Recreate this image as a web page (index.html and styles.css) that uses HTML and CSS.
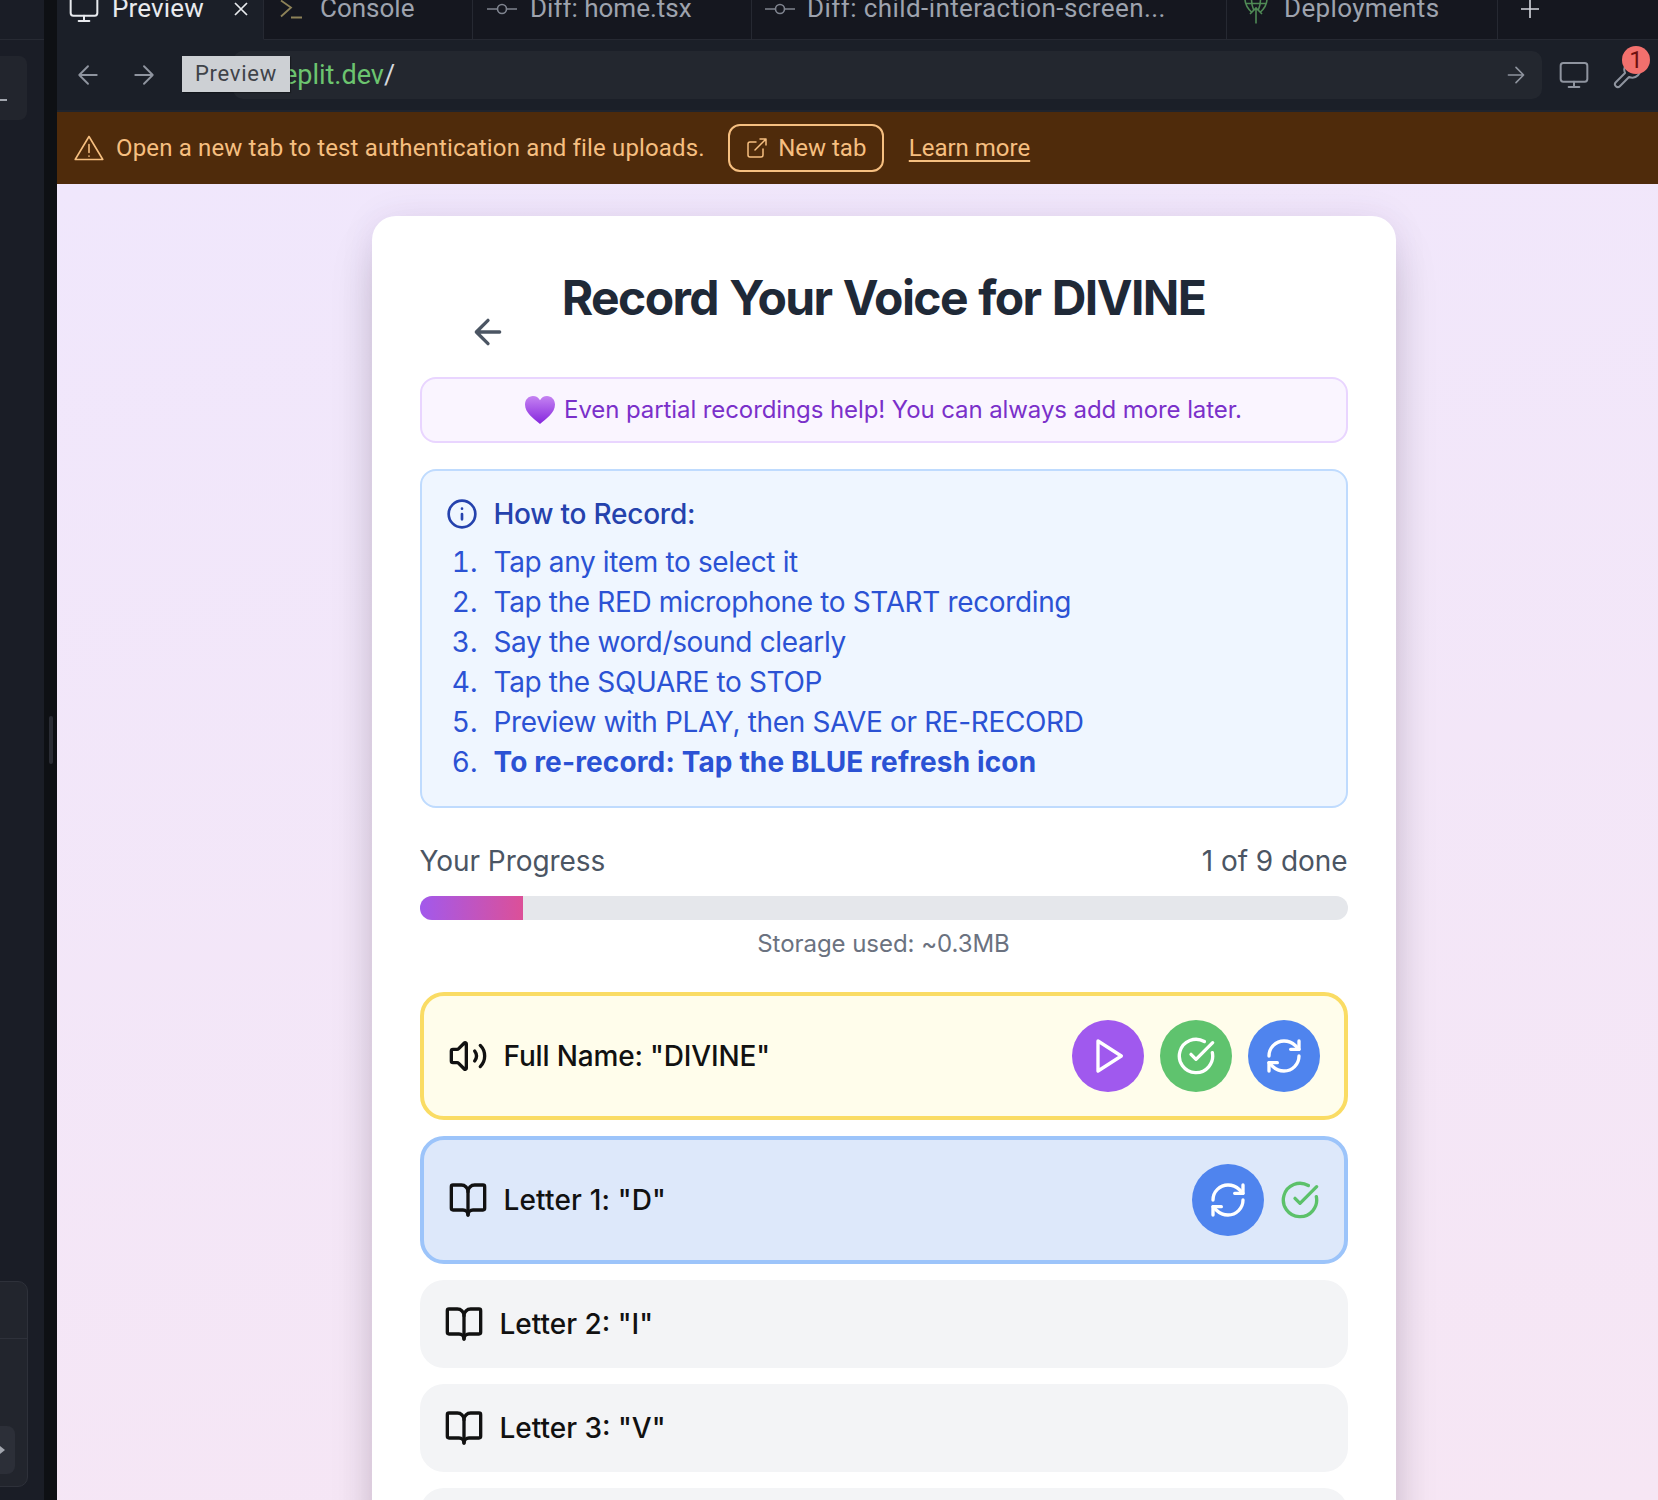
FILE: index.html
```html
<!DOCTYPE html>
<html lang="en">
<head>
<meta charset="utf-8">
<title>Record Your Voice for DIVINE</title>
<link rel="stylesheet" href="styles.css">
</head>
<body>
<svg class="sprite" xmlns="http://www.w3.org/2000/svg">
  <symbol id="i-monitor" viewBox="0 0 24 24"><rect x="2" y="3" width="20" height="14" rx="2"/><path d="M8 21h8M12 17v4"/></symbol>
  <symbol id="i-left" viewBox="0 0 24 24"><path d="m12 19-7-7 7-7M19 12H5"/></symbol>
  <symbol id="i-right" viewBox="0 0 24 24"><path d="M5 12h14M12 5l7 7-7 7"/></symbol>
  <symbol id="i-refresh" viewBox="0 0 24 24"><path d="M3 12a9 9 0 0 1 9-9 9.75 9.75 0 0 1 6.74 2.74L21 8"/><path d="M21 3v5h-5"/><path d="M21 12a9 9 0 0 1-9 9 9.75 9.75 0 0 1-6.74-2.74L3 16"/><path d="M8 16H3v5"/></symbol>
  <symbol id="i-check" viewBox="0 0 24 24"><path d="M21.801 10A10 10 0 1 1 17 3.335"/><path d="m9 11 3 3L22 4"/></symbol>
  <symbol id="i-book" viewBox="0 0 24 24"><path d="M12 7v14"/><path d="M3 18a1 1 0 0 1-1-1V4a1 1 0 0 1 1-1h5a4 4 0 0 1 4 4 4 4 0 0 1 4-4h5a1 1 0 0 1 1 1v13a1 1 0 0 1-1 1h-6a3 3 0 0 0-3 3 3 3 0 0 0-3-3z"/></symbol>
  <symbol id="i-commit" viewBox="0 0 30 18"><circle cx="15" cy="9" r="4.5"/><path d="M0 9h10.5M19.500 9H30"/></symbol>
</svg>

<div class="app">
  <aside class="sidebar">
    <div class="side-head"></div>
    <div class="side-chip"><span class="side-dash"></span></div>
    <div class="side-panel">
      <div class="side-panel-top"></div>
      <div class="side-panel-body"><div class="side-play"><span class="side-tri"></span></div></div>
    </div>
  </aside>
  <div class="gutter"><span class="handle"></span></div>

  <main class="main">
    <nav class="tabs">
      <div class="tab tab-active tab-preview">
        <div class="tab-row">
          <svg class="ico ico-tab-monitor"><use href="#i-monitor"/></svg>
          <span class="tab-label">Preview</span>
          <svg class="ico-close" viewBox="0 0 24 24"><path d="M6 6l12 12M18 6L6 18"/></svg>
        </div>
      </div>
      <div class="tab tab-console">
        <div class="tab-row">
          <svg class="ico-console" viewBox="0 0 28 28"><path d="M4 5.5l10 7-10 9M14 22.500h11"/></svg>
          <span class="tab-label">Console</span>
        </div>
      </div>
      <div class="tab tab-diff1">
        <div class="tab-row">
          <svg class="ico-commit"><use href="#i-commit"/></svg>
          <span class="tab-label">Diff: home.tsx</span>
        </div>
      </div>
      <div class="tab tab-diff2">
        <div class="tab-row">
          <svg class="ico-commit"><use href="#i-commit"/></svg>
          <span class="tab-label">Diff: child-interaction-screen...</span>
        </div>
      </div>
      <div class="tab tab-deploy">
        <div class="tab-row">
          <svg class="ico-deploy" viewBox="0 0 24 30"><path d="M12 14v15.500M6 20l6-6 6 6M1 5c0 5 3 10 7 13.500M23 5c0 5-3 10-7 13.500M1.500 9.500h21M7.500 5c0 4 .5 7 2 10.500M16.500 5c0 4-.5 7-2 10.500"/></svg>
          <span class="tab-label">Deployments</span>
        </div>
      </div>
      <div class="tab-add">
        <div class="tab-row">
          <svg class="ico-plus" viewBox="0 0 18 18"><path d="M9 0v18M0 9h18"/></svg>
        </div>
      </div>
    </nav>

    <div class="toolbar">
      <svg class="ico ico-nav"><use href="#i-left"/></svg>
      <svg class="ico ico-nav"><use href="#i-right"/></svg>
      <div class="urlbar">
        <span class="url"><span class="url-host">replit.dev</span>/</span>
        <svg class="ico ico-go"><use href="#i-right"/></svg>
      </div>
      <span class="tooltip">Preview</span>
      <svg class="ico ico-tool"><use href="#i-monitor"/></svg>
      <div class="wrench">
        <svg class="ico ico-tool" viewBox="0 0 24 24"><path d="M14.7 6.3a1 1 0 0 0 0 1.4l1.6 1.6a1 1 0 0 0 1.4 0l3.77-3.77a6 6 0 0 1-7.94 7.94l-6.91 6.91a2.12 2.12 0 0 1-3-3l6.91-6.91a6 6 0 0 1 7.94-7.94l-3.76 3.76z"/></svg>
        <span class="badge">1</span>
      </div>
    </div>

    <div class="banner">
      <svg class="ico-warn" viewBox="0 0 30 26"><path d="M15 1.500 1.200 24.500h27.600zM15 9.500v8M15 21v.2"/></svg>
      <span class="banner-text">Open a new tab to test authentication and file uploads.</span>
      <span class="newtab">
        <svg class="ico-ext" viewBox="0 0 24 24"><path d="M18 13v6a2 2 0 0 1-2 2H5a2 2 0 0 1-2-2V8a2 2 0 0 1 2-2h6M15 3h6v6M10 14 21 3"/></svg>
        New tab
      </span>
      <a class="learn">Learn more</a>
    </div>

    <div class="page">
      <section class="card">
        <header class="card-head">
          <svg class="ico ico-back"><use href="#i-left"/></svg>
          <h1 class="title">Record Your Voice for DIVINE</h1>
        </header>

        <div class="note">
          <svg class="heart" viewBox="0 0 30 28">
            <defs><linearGradient id="hg" x1="0" y1="0" x2="0" y2="1"><stop offset="0" stop-color="#c583f2"/><stop offset="1" stop-color="#8526dd"/></linearGradient></defs>
            <path fill="url(#hg)" d="M15 28C9 23 0 17 0 8.500 0 3.500 3.600 0 8 0c3 0 5.600 1.600 7 4.200C16.400 1.600 19 0 22 0c4.400 0 8 3.500 8 8.500C30 17 21 23 15 28z"/>
          </svg>
          <span class="note-text">Even partial recordings help! You can always add more later.</span>
        </div>

        <div class="howto">
          <div class="howto-head">
            <svg class="ico ico-info" viewBox="0 0 24 24"><circle cx="12" cy="12" r="10"/><path d="M12 16v-4M12 8h.01"/></svg>
            <h2 class="howto-title">How to Record:</h2>
          </div>
          <ol class="steps">
            <li class="step"><span class="num">1.</span><span>Tap any item to select it</span></li>
            <li class="step"><span class="num">2.</span><span>Tap the RED microphone to START recording</span></li>
            <li class="step"><span class="num">3.</span><span>Say the word/sound clearly</span></li>
            <li class="step"><span class="num">4.</span><span>Tap the SQUARE to STOP</span></li>
            <li class="step"><span class="num">5.</span><span>Preview with PLAY, then SAVE or RE-RECORD</span></li>
            <li class="step"><span class="num">6.</span><strong class="step-strong">To re-record: Tap the BLUE refresh icon</strong></li>
          </ol>
        </div>

        <div class="progress">
          <div class="progress-head"><span>Your Progress</span><span>1 of 9 done</span></div>
          <div class="bar"><div class="bar-fill"></div></div>
          <p class="storage">Storage used: ~0.3MB</p>
        </div>

        <div class="items">
          <div class="item item-current">
            <svg class="ico ico-item" viewBox="0 0 24 24"><path d="M11 4.702a.705.705 0 0 0-1.203-.498L6.413 7.587A1.4 1.4 0 0 1 5.416 8H3a1 1 0 0 0-1 1v6a1 1 0 0 0 1 1h2.416a1.4 1.4 0 0 1 .997.413l3.383 3.384A.705.705 0 0 0 11 19.298z"/><path d="M16 9a5 5 0 0 1 0 6"/><path d="M19.364 18.364a9 9 0 0 0 0-12.728"/></svg>
            <span class="item-label">Full Name: "DIVINE"</span>
            <div class="actions">
              <button class="round round-purple"><svg class="ico ico-btn" viewBox="0 0 24 24"><path d="M6 3l14 9-14 9z"/></svg></button>
              <button class="round round-green"><svg class="ico ico-btn"><use href="#i-check"/></svg></button>
              <button class="round round-blue"><svg class="ico ico-btn"><use href="#i-refresh"/></svg></button>
            </div>
          </div>
          <div class="item item-done">
            <svg class="ico ico-item"><use href="#i-book"/></svg>
            <span class="item-label">Letter 1: "D"</span>
            <div class="actions">
              <button class="round round-blue"><svg class="ico ico-btn"><use href="#i-refresh"/></svg></button>
              <svg class="ico ico-ok"><use href="#i-check"/></svg>
            </div>
          </div>
          <div class="item">
            <svg class="ico ico-item"><use href="#i-book"/></svg>
            <span class="item-label">Letter 2: "I"</span>
          </div>
          <div class="item">
            <svg class="ico ico-item"><use href="#i-book"/></svg>
            <span class="item-label">Letter 3: "V"</span>
          </div>
          <div class="item">
            <svg class="ico ico-item"><use href="#i-book"/></svg>
            <span class="item-label">Letter 4: "I"</span>
          </div>
        </div>
      </section>
    </div>
  </main>
</div>
</body>
</html>
```
FILE: styles.css
```css
* { box-sizing: border-box; }
html, body { margin: 0; height: 1500px; overflow: hidden; background: #1a1d26; }
.sprite { display: none; }
.app { display: flex; width: 1658px; height: 1500px; overflow: hidden; }

.ico { fill: none; stroke: currentColor; stroke-width: 2; stroke-linecap: round; stroke-linejoin: round; flex: none; }

/* left rail */
.sidebar { width: 44px; flex: none; background: #1a1d26; display: flex; flex-direction: column; overflow: hidden; }
.side-head { height: 40px; flex: none; border-bottom: 1px solid #272a33; }
.side-chip { width: 47px; height: 64px; margin: 16px 0 0 -20px; border-radius: 8px; background: #22252d; display: flex; align-items: center; justify-content: flex-end; flex: none; padding-top: 24px; }
.side-dash { width: 8px; height: 2px; background: #a2a6ae; margin-right: 20px; }
.side-panel { margin: auto 0 13px -20px; width: 48px; height: 206px; border: 1px solid #2e313a; border-radius: 10px; background: #22252d; flex: none; display: flex; flex-direction: column; }
.side-panel-top { height: 57px; border-bottom: 1px solid #2e313a; }
.side-panel-body { flex: 1; display: flex; align-items: flex-end; padding-bottom: 12px; }
.side-play { width: 34px; height: 48px; border-radius: 8px; background: #2c2f38; display: flex; align-items: center; justify-content: flex-end; padding-right: 10px; }
.side-tri { width: 0; height: 0; border-left: 5px solid #a2a6ae; border-top: 4px solid transparent; border-bottom: 4px solid transparent; }

.gutter { width: 13px; flex: none; background: #0e1014; display: flex; flex-direction: column; align-items: center; padding-top: 716px; }
.handle { width: 4px; height: 48px; border-radius: 2px; background: #2a2c34; }

.main { flex: 1; min-width: 0; display: flex; flex-direction: column; }

/* tabs */
.tabs { height: 40px; flex: none; display: flex; background: #15171f; border-bottom: 1px solid #262932; font: 400 26px/1 Roboto, sans-serif; color: #9ea3ae; }
.tab { height: 40px; flex: none; border-right: 1px solid #262932; overflow: hidden; }
.tab-row { height: 17px; display: flex; align-items: center; }
.tab-label { white-space: nowrap; margin-bottom: 2px; }
.tab-active { background: #1b1f28; color: #e8eaee; border-bottom: 1px solid #1b1f28; }
.tab-preview { width: 207px; padding-left: 11px; letter-spacing: .15px; }
.tab-console { width: 209px; padding-left: 13px; }
.tab-diff1 { width: 279px; padding-left: 14px; }
.tab-diff2 { width: 475px; padding-left: 13px; letter-spacing: .42px; }
.tab-deploy { width: 271px; padding-left: 17px; letter-spacing: .35px; }
.tab-add { flex: 1; padding-left: 23px; height: 40px; overflow: hidden; }
.ico-tab-monitor { width: 32px; height: 32px; stroke-width: 1.5; margin-right: 12px; }
.ico-close { width: 24px; height: 24px; margin-left: 25px; fill: none; stroke: #e8eaee; stroke-width: 1.7; flex: none; }
.ico-console { width: 28px; height: 28px; margin-right: 15px; fill: none; stroke: #8d8258; stroke-width: 1.8; flex: none; }
.ico-commit { width: 30px; height: 18px; margin-right: 14px; fill: none; stroke: #7f848f; stroke-width: 1.6; flex: none; }
.tab-diff1 .ico-commit { margin-right: 13px; }
.tab-diff2 .ico-commit { margin-right: 12px; }
.ico-deploy { width: 24px; height: 30px; margin: 0 16px 0 0; fill: none; stroke: #4f8a55; stroke-width: 1.6; flex: none; }
.ico-plus { width: 18px; height: 18px; fill: none; stroke: #d5d8de; stroke-width: 1.6; flex: none; }

/* toolbar */
.toolbar { height: 72px; flex: none; background: #1b1f28; border-bottom: 2px solid #20242d; display: flex; align-items: center; padding-left: 16px; position: relative; }
.ico-nav { width: 30px; height: 30px; stroke-width: 1.5; color: #8f949f; margin-right: 26px; }
.urlbar { width: 1309px; height: 48px; margin-left: 48px; border-radius: 10px; background: #23272f; display: flex; align-items: center; justify-content: space-between; padding: 0 13px 0 41px; flex: none; }
.url { font: 400 27px/1 Roboto, sans-serif; color: #d5d8de; white-space: nowrap; }
.url-host { color: #6cc46f; }
.ico-go { width: 26px; height: 26px; stroke-width: 1.5; color: #8f949f; }
.tooltip { position: absolute; left: 125px; top: 16px; width: 108px; height: 36px; background: #cdd0d4; color: #3f4349; font: 400 22px/36px Roboto, sans-serif; letter-spacing: .75px; text-align: center; box-shadow: 1px 1px 1px rgba(0,0,0,.3); }
.ico-tool { width: 32px; height: 32px; stroke-width: 1.5; color: #8f949f; }
.toolbar > .ico-tool { margin-left: 16px; }
.wrench { position: relative; width: 32px; height: 32px; margin-left: 21px; flex: none; }
.badge { position: absolute; left: 11px; top: -13px; width: 28px; height: 28px; border-radius: 50%; background: #f2706d; color: #6e0f0f; font: 400 24px/28px Roboto, sans-serif; text-align: center; }

/* banner */
.banner { height: 72px; flex: none; background: #4f2b0b; color: #f6bf80; display: flex; align-items: center; padding-left: 17px; font: 400 24px/1 Roboto, sans-serif; }
.ico-warn { width: 30px; height: 26px; fill: none; stroke: currentColor; stroke-width: 1.6; stroke-linejoin: round; stroke-linecap: round; flex: none; margin-right: 12px; }
.banner-text { white-space: nowrap; letter-spacing: .15px; }
.newtab { width: 156px; height: 48px; margin-left: 23px; border: 2px solid #f6bf80; border-radius: 12px; display: flex; align-items: center; justify-content: center; gap: 9px; flex: none; }
.ico-ext { width: 24px; height: 24px; fill: none; stroke: currentColor; stroke-width: 1.5; stroke-linecap: round; stroke-linejoin: round; flex: none; }
.learn { margin-left: 25px; text-decoration: underline; text-decoration-thickness: 2px; text-underline-offset: 4px; }

/* page */
.page { flex: 1; min-height: 0; padding: 32px 0 0 314.5px; background: linear-gradient(170deg, #f0e7fc 0%, #f6e6f4 100%); font-family: Inter, sans-serif; }
.card { width: 1024px; padding: 48px; background: #fff; border-radius: 24px; box-shadow: 0 25px 50px -12px rgba(0,0,0,.25), 0 0 36px rgba(70,30,110,.07); }
.card-head { display: flex; height: 113px; }
.ico-back { width: 40px; height: 40px; color: #4b5563; margin: 48px 0 0 48px; }
.title { flex: none; width: 928px; margin: 0 0 0 -88px; font: 700 48px/68px Inter, sans-serif; color: #1f2937; text-align: center; letter-spacing: -1.6px; word-spacing: 1.5px; white-space: nowrap; }
.note { height: 66px; border: 2px solid #e9d5ff; border-radius: 16px; background: #faf5ff; color: #7a30ca; font-size: 24px; line-height: 30px; display: flex; align-items: center; justify-content: center; gap: 9px; }
.note-text { letter-spacing: -.09px; }
.heart { width: 30px; height: 28px; flex: none; }
.howto { margin-top: 26px; height: 339px; padding: 24px; border: 2px solid #bfdbfe; border-radius: 16px; background: #eff6ff; color: #2b52d4; }
.howto-head { display: flex; align-items: center; gap: 16px; height: 38px; margin-bottom: 9px; color: #2542ad; }
.ico-info { width: 32px; height: 32px; }
.howto-title { margin: 0; font: 500 28px/38px Inter, sans-serif; letter-spacing: -.23px; }
.steps { list-style: none; margin: 0; padding: 0; font-size: 28px; line-height: 40px; letter-spacing: -.36px; }
.step { display: flex; gap: 16px; }
.num { width: 32px; text-align: right; flex: none; letter-spacing: 0; font-variant-numeric: tabular-nums; }
.step-strong { font-weight: 700; letter-spacing: .14px; }

.progress { margin-top: 32px; }
.progress-head { display: flex; justify-content: space-between; height: 42px; font-size: 28px; line-height: 42px; color: #4b5563; letter-spacing: -.06px; }
.bar { height: 24px; margin-top: 14px; border-radius: 12px; background: #e5e7eb; overflow: hidden; }
.bar-fill { width: 11.1%; height: 100%; background: linear-gradient(90deg, #a259ec, #dc5098); }
.storage { margin: 8px 0 0; font-size: 24px; line-height: 32px; color: #6b7280; text-align: center; letter-spacing: -.05px; }

.items { margin-top: 32px; display: flex; flex-direction: column; gap: 16px; }
.item { min-height: 88px; padding: 24px; border-radius: 24px; background: #f3f4f6; display: flex; align-items: center; gap: 16px; color: #111; }
.item-current { border: 4px solid #fadc64; background: #fffdeb; }
.item-done { border: 4px solid #9cc4fa; background: #dde8fa; }
.ico-item { width: 40px; height: 40px; }
.item-label { font-size: 28px; font-weight: 500; line-height: 40px; }
.item-current .item-label { letter-spacing: -.16px; }
.item-done .item-label { letter-spacing: .16px; }
.actions { margin-left: auto; display: flex; align-items: center; gap: 16px; }
.round { width: 72px; height: 72px; padding: 0; border: 0; border-radius: 50%; display: flex; align-items: center; justify-content: center; color: #fff; }
.round-purple { background: #a059ee; }
.round-green { background: #5fc36e; }
.round-blue { background: #4f84ee; }
.ico-btn { width: 40px; height: 40px; }
.ico-ok { width: 40px; height: 40px; color: #5cc16a; }
```
